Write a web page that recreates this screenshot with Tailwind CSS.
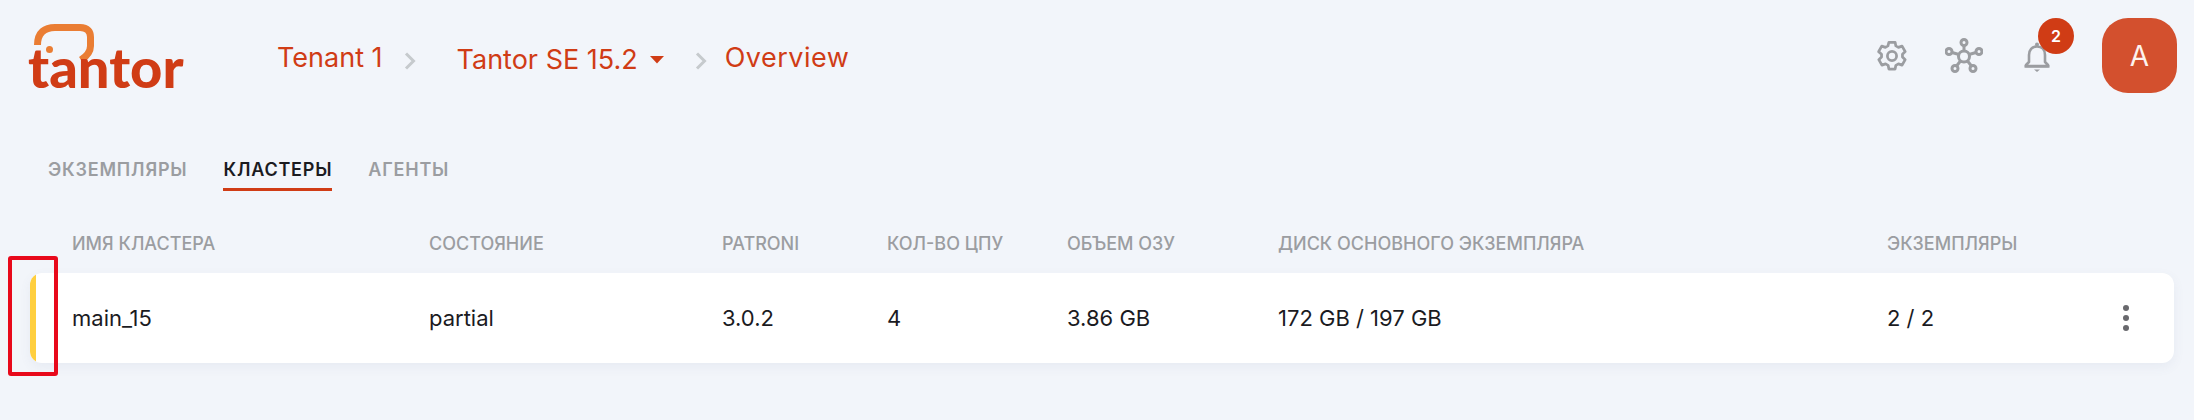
<!DOCTYPE html>
<html lang="en">
<head>
  <meta charset="UTF-8" />
  <meta name="viewport" content="width=device-width, initial-scale=1" />
  <title>Tantor</title>
  <script src="https://cdn.jsdelivr.net/npm/@tailwindcss/browser@4"></script>
</head>
<body class="bg-[#f2f5fa] h-[420px] overflow-hidden relative font-['Inter','Noto_Sans',sans-serif]">
  <header class="flex items-center h-[111px] pl-[28px] pr-[17px]">
    <!-- logo -->
    <div class="relative w-[156px] h-[64px] shrink-0">
      <svg class="absolute left-0 top-0" width="70" height="42" viewBox="0 0 70 42" fill="none">
        <path d="M9.500 21C9.500 8 17 3.500 27 3.500H52C60 3.500 62.500 8 62.500 13V22C62.500 28 59 32 53 36" stroke="#ea7d33" stroke-width="7"/>
        <circle cx="21.500" cy="25.500" r="3.500" fill="#ea7d33"/>
      </svg>
      <span class="absolute left-0 bottom-[-11px] font-['Lato'] font-black text-[56px] leading-[64px] tracking-[0px] text-[#d03c15]">tantor</span>
    </div>

    <nav class="flex items-center ml-[93px] mt-[6px] text-[27px] leading-[32px] text-[#d03c15]">
      <span class="-mt-[2px]">Tenant 1</span>
      <svg class="ml-[21px] mt-[4px]" width="12" height="20" viewBox="0 0 12 20" fill="none"><path d="M2 2.500L9.500 10L2 17.500" stroke="#c6cacd" stroke-width="3"/></svg>
      <span class="ml-[41px] mt-[3px]">Tantor SE 15.2</span>
      <svg class="ml-[12px] mt-[3px]" width="14" height="8" viewBox="0 0 14 8"><path d="M0 0H14L7 7.500Z" fill="#d03c15"/></svg>
      <svg class="ml-[31px] mt-[4px]" width="12" height="20" viewBox="0 0 12 20" fill="none"><path d="M2 2.500L9.500 10L2 17.500" stroke="#c6cacd" stroke-width="3"/></svg>
      <span class="ml-[18px] -mt-[2px] tracking-[0.5px]">Overview</span>
    </nav>

    <div class="ml-auto flex items-center">
      <!-- settings -->
      <svg width="44" height="44" viewBox="0 0 24 24" fill="none" stroke="#9b9da1" stroke-width="1.500" stroke-linejoin="round">
        <path d="M10.300 4.500h3.400l.4 2 1.400.8 2-.7 1.700 3-1.500 1.400v1.600l1.500 1.400-1.700 3-2-.7-1.400.8-.4 2h-3.400l-.4-2-1.400-.8-2 .7-1.700-3 1.500-1.400v-1.600L4.700 9.600l1.700-3 2 .7 1.400-.8z"/>
        <circle cx="12" cy="12" r="2.500"/>
      </svg>
      <!-- cluster -->
      <svg class="ml-[31px]" width="38" height="36" viewBox="0 0 38 36" fill="none" stroke="#9b9da1" stroke-width="3">
        <circle cx="19" cy="18.500" r="5.500"/>
        <circle cx="19" cy="4.500" r="3"/>
        <circle cx="4" cy="13.500" r="3"/>
        <circle cx="34" cy="13.500" r="3"/>
        <circle cx="10" cy="30.500" r="3"/>
        <circle cx="28" cy="30.500" r="3"/>
        <path d="M19 7.500V13M7 14.500L14 16.500M31 14.500L24 16.500M11.500 28L15.500 23M26.500 28L22.500 23"/>
      </svg>
      <!-- bell with badge -->
      <div class="relative ml-[41px] w-[26px] h-[32px] mt-[2px]">
        <svg width="26" height="32" viewBox="0 0 26 32" fill="none">
          <path d="M2 25V24L5 21V14C5 9 8 5.500 13 5.500C18 5.500 21 9 21 14V21L24 24V25Z" stroke="#9b9da1" stroke-width="2.600" stroke-linejoin="round"/>
          <path d="M0.500 25.500H25.500" stroke="#9b9da1" stroke-width="2.500"/>
          <path d="M10 28.500H16L13 31Z" fill="#9b9da1"/>
          <circle cx="13" cy="3.500" r="2" fill="#9b9da1"/>
        </svg>
        <span class="absolute left-[14px] -top-[23px] w-[36px] h-[36px] rounded-full bg-[#d03c15] text-white text-[16px] font-semibold flex items-center justify-center">2</span>
      </div>
      <div class="ml-[52px] w-[75px] h-[75px] rounded-[26px] bg-[#d3502e] text-[#fdf3ef] text-[28px] flex items-center justify-center">A</div>
    </div>
  </header>

  <!-- tabs -->
  <div class="flex pl-[48px] gap-[36px] mt-[48px] text-[18px] leading-[22px] font-semibold uppercase tracking-[0.8px]">
    <a class="text-[#9b9da1] pb-[8px]">Экземпляры</a>
    <a class="text-[#1b1b1f] pb-[7px] border-b-[3px] border-[#d03c15]">Кластеры</a>
    <a class="text-[#9b9da1] pb-[8px]">Агенты</a>
  </div>

  <!-- table -->
  <div class="pl-[30px] pr-[20px] mt-[42px]">
    <div class="grid grid-cols-[42px_357px_293px_165px_180px_211px_609px_1fr] text-[18px] leading-[22px] font-medium uppercase text-[#9b9da1] h-[40px]">
      <div></div>
      <div>Имя кластера</div>
      <div>Состояние</div>
      <div>Patroni</div>
      <div>Кол-во ЦПУ</div>
      <div>Объем ОЗУ</div>
      <div>Диск основного экземпляра</div>
      <div>Экземпляры</div>
    </div>
    <div class="flex h-[90px] bg-white rounded-[12px] overflow-hidden shadow-[0_4px_12px_rgba(80,100,140,0.07)] text-[22px] text-[#1b1b1f]">
      <div class="w-[6px] bg-[#ffcf3f] shrink-0"></div>
      <div class="grow grid grid-cols-[36px_357px_293px_165px_180px_211px_609px_1fr] items-center">
        <div></div>
        <div>main_15</div>
        <div>partial</div>
        <div>3.0.2</div>
        <div>4</div>
        <div>3.86 GB</div>
        <div>172 GB / 197 GB</div>
        <div class="flex items-center justify-between pr-[45px]">
          <span>2 / 2</span>
          <span class="flex flex-col gap-[4px]">
            <i class="block w-[6px] h-[6px] rounded-full bg-[#69696d]"></i>
            <i class="block w-[6px] h-[6px] rounded-full bg-[#69696d]"></i>
            <i class="block w-[6px] h-[6px] rounded-full bg-[#69696d]"></i>
          </span>
        </div>
      </div>
    </div>
  </div>

  <!-- annotation box -->
  <div class="absolute left-[8px] top-[256px] w-[50px] h-[120px] border-[4px] border-[#e8091b] rounded-[3px]"></div>
</body>
</html>
